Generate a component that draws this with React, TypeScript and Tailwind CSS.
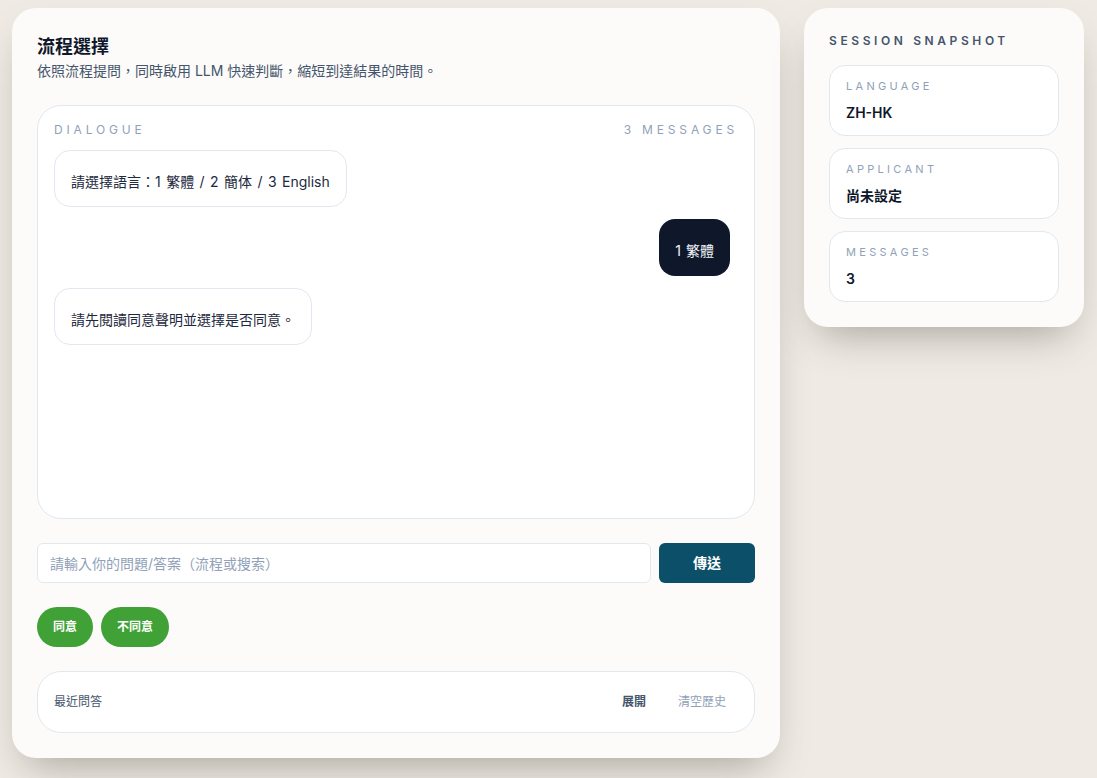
import { useState } from 'react'

const FONT = "font-['Inter','Noto_Sans_CJK_TC',sans-serif]"

type Msg = { id: number; role: 'bot' | 'user'; text: string }

const MESSAGES: Msg[] = [
  { id: 1, role: 'bot', text: '請選擇語言：1 繁體 / 2 簡体 / 3 English' },
  { id: 2, role: 'user', text: '1 繁體' },
  { id: 3, role: 'bot', text: '請先閱讀同意聲明並選擇是否同意。' },
]

const SNAPSHOT = [
  { label: 'Language', value: 'ZH-HK' },
  { label: 'Applicant', value: '尚未設定' },
  { label: 'Messages', value: '3' },
]

export default function App() {
  const [draft, setDraft] = useState('')

  return (
    <div
      className={`${FONT} flex min-h-screen items-start gap-6 bg-[#efebe4] pl-3 pt-2 text-slate-900`}
    >
      <main className="flex w-[768px] flex-col gap-6 rounded-3xl bg-[#fcfbf9] p-[25px] shadow-[0_20px_40px_-14px_rgba(60,50,40,0.4)]">
        <header>
          <h1 className="text-lg font-bold leading-7 text-slate-900">流程選擇</h1>
          <p className="text-sm text-slate-600">
            依照流程提問，同時啟用 LLM 快速判斷，縮短到達結果的時間。
          </p>
        </header>

        <section className="flex h-[414px] flex-col rounded-3xl border border-slate-200 bg-white p-4">
          <div className="flex items-center justify-between text-xs uppercase tracking-[0.32em] text-slate-400">
            <span>Dialogue</span>
            <span>3 messages</span>
          </div>
          <div className="mt-3 flex flex-col gap-3 pr-2">
            {MESSAGES.map((m) =>
              m.role === 'user' ? (
                <div key={m.id} className="flex justify-end">
                  <div className="rounded-2xl bg-slate-900 px-4 pb-[15px] pt-[22px] text-sm text-slate-100 [word-spacing:1px]">
                    {m.text}
                  </div>
                </div>
              ) : (
                <div key={m.id} className="flex justify-start">
                  <div className="rounded-2xl border border-slate-200 bg-white px-4 pb-[14px] pt-[21px] text-sm text-slate-800 [word-spacing:1.5px]">
                    {m.text}
                  </div>
                </div>
              ),
            )}
          </div>
        </section>

        <div className="flex gap-2">
          <input
            value={draft}
            onChange={(e) => setDraft(e.target.value)}
            placeholder="請輸入你的問題/答案（流程或搜索）"
            className="h-10 flex-1 rounded-md border border-slate-200 bg-white px-3 text-sm text-slate-800 outline-none placeholder:text-slate-400"
          />
          <button className="h-10 w-24 rounded-md bg-[#0c4f69] text-sm font-semibold text-white">
            傳送
          </button>
        </div>

        <div className="flex gap-2">
          <button className="h-10 rounded-full bg-[#40a136] px-4 text-xs font-semibold text-white">
            同意
          </button>
          <button className="h-10 rounded-full bg-[#40a136] px-4 text-xs font-semibold text-white">
            不同意
          </button>
        </div>

        <section className="flex h-[62px] items-center justify-between rounded-3xl border border-slate-200 bg-white px-4">
          <span className="text-xs text-slate-600">最近問答</span>
          <div className="flex gap-2">
            <button className="px-3 py-2 text-xs font-semibold text-slate-600">展開</button>
            <button className="px-3 py-2 text-xs text-slate-400">清空歷史</button>
          </div>
        </section>
      </main>

      <aside className="w-[280px] rounded-3xl bg-[#fcfbf9] p-[25px] shadow-[0_20px_40px_-14px_rgba(60,50,40,0.4)]">
        <h2 className="text-xs font-semibold uppercase tracking-[0.3em] text-slate-600">
          Session snapshot
        </h2>
        <div className="mt-4 flex flex-col gap-3">
          {SNAPSHOT.map((s) => (
            <div
              key={s.label}
              className="rounded-2xl border border-slate-200 bg-white px-4 pb-3 pt-3"
            >
              <div className="text-[11px] uppercase leading-4 tracking-[0.3em] text-slate-400">
                {s.label}
              </div>
              <div className="mt-[9px] text-sm font-semibold text-slate-900">{s.value}</div>
            </div>
          ))}
        </div>
      </aside>
    </div>
  )
}
